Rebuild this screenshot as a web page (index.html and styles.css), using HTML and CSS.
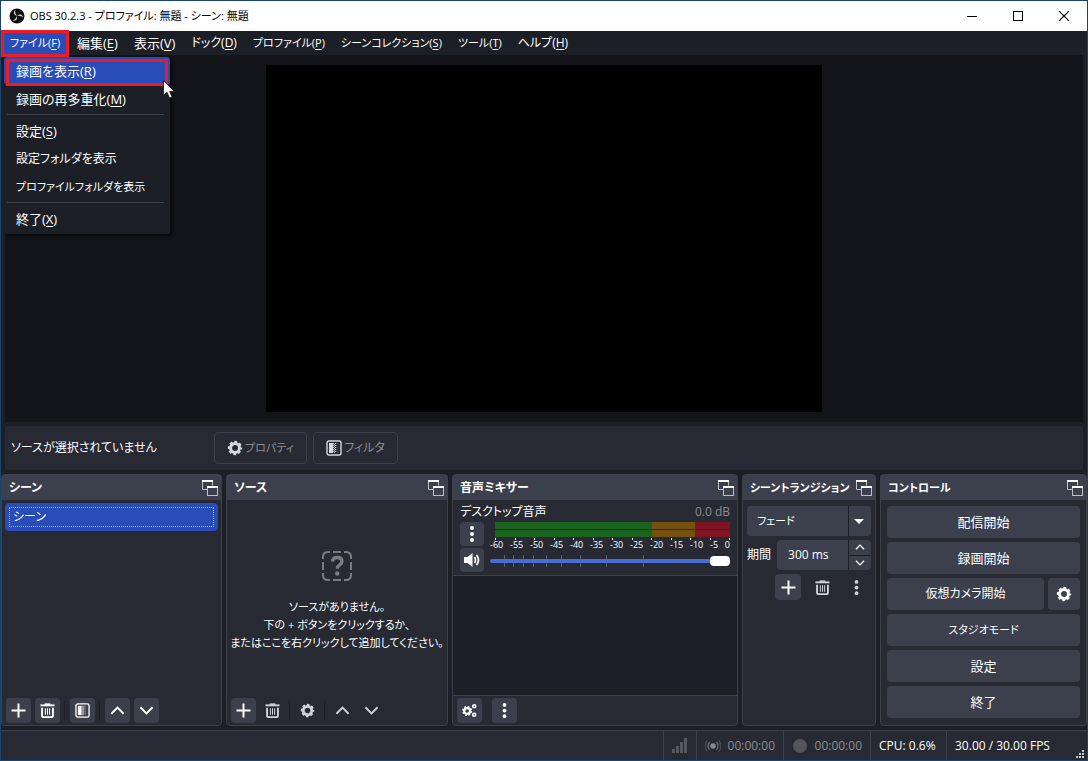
FILE: index.html
```html
<!DOCTYPE html>
<html lang="ja">
<head>
<meta charset="utf-8">
<meta name="viewport" content="width=device-width, initial-scale=1">
<title>OBS 30.2.3</title>
<link rel="stylesheet" href="styles.css">
</head>
<body>
<svg class="sprite" aria-hidden="true">
  <symbol id="i-plus" viewBox="0 0 15 15"><path d="M7.500 .5v14M.5 7.500h14" stroke="currentColor" stroke-width="2" fill="none"/></symbol>
  <symbol id="i-trash" viewBox="0 0 16 16"><path d="M.5 2.500h15" stroke="currentColor" stroke-width="2"/><path d="M5 1.200h6" stroke="currentColor" stroke-width="1.600"/><path d="M2.200 5v8.200q0 1.800 1.800 1.800h8q1.800 0 1.800-1.800V5" stroke="currentColor" stroke-width="2" fill="none"/><path d="M5.700 5.500v7M8 5.500v7M10.300 5.500v7" stroke="currentColor" stroke-width="1.100"/></symbol>
  <symbol id="i-filter" viewBox="0 0 16 16"><rect x="1" y="1" width="14" height="14" rx="2" fill="none" stroke="currentColor" stroke-width="1.400"/><path d="M3 3h4v10H3z" fill="currentColor"/><path d="M7.500 3v10M9.500 3v10" stroke="currentColor" stroke-width="1" stroke-dasharray="1 1"/><path d="M8.500 4v9" stroke="currentColor" stroke-width="1" stroke-dasharray="1 1"/><path d="M11 3v10" stroke="currentColor" stroke-width="1" stroke-dasharray="1 1" opacity=".5"/></symbol>
  <symbol id="i-up" viewBox="0 0 16 16"><path d="M1.500 11.500L8 5l6.500 6.500" stroke="currentColor" stroke-width="2" fill="none"/></symbol>
  <symbol id="i-down" viewBox="0 0 16 16"><path d="M1.500 4.500L8 11l6.500-6.500" stroke="currentColor" stroke-width="2" fill="none"/></symbol>
  <symbol id="i-gear" viewBox="0 0 16 16"><circle cx="8" cy="8" r="4.500" fill="none" stroke="currentColor" stroke-width="3"/><circle cx="8" cy="8" r="6.200" fill="none" stroke="currentColor" stroke-width="2" stroke-dasharray="2.800 2.070" stroke-dashoffset="1.400"/></symbol>
  <symbol id="i-dots" viewBox="0 0 16 16"><circle cx="8" cy="2" r="2" fill="currentColor"/><circle cx="8" cy="8" r="2" fill="currentColor"/><circle cx="8" cy="14" r="2" fill="currentColor"/></symbol>
  <symbol id="i-float" viewBox="0 0 16 16"><path d="M5 9.500H.5v-9h10v5" fill="none" stroke="#bebfc4"/><path d="M0 1h11" stroke="#fff" stroke-width="2"/><rect x="5.500" y="6.500" width="10" height="9" fill="none" stroke="#bebfc4"/><path d="M5 7h11" stroke="#fff" stroke-width="2"/></symbol>
  <symbol id="i-gears" viewBox="0 0 16 16"><circle cx="5.500" cy="8.500" r="3.100" fill="none" stroke="currentColor" stroke-width="2.400"/><circle cx="5.500" cy="8.500" r="4.600" fill="none" stroke="currentColor" stroke-width="1.500" stroke-dasharray="2 1.613"/><circle cx="13" cy="3.500" r="1.600" fill="none" stroke="currentColor" stroke-width="1.700"/><circle cx="13" cy="12.500" r="1.600" fill="none" stroke="currentColor" stroke-width="1.700"/></symbol>
  <symbol id="i-speaker" viewBox="0 0 16 16"><path d="M0 5h3.500L8.500 1v14l-5-4H0z" fill="currentColor"/><path d="M10.500 5q2 3 0 6M12.500 3q4 5 0 10" fill="none" stroke="currentColor" stroke-width="1.700"/></symbol>
</svg>

<div class="window">
  <header class="titlebar">
    <svg class="logo" viewBox="0 0 16 16"><circle cx="8" cy="8" r="7.500" fill="#0c0c0c"/><g fill="#d8d8d8"><path d="M6.500 2C3.900 3.700 4.300 7 8 7.800 6.200 6.300 5.800 4.200 6.500 2z"/><path d="M6.500 2C3.900 3.700 4.300 7 8 7.800 6.200 6.300 5.800 4.200 6.500 2z" transform="rotate(120 8 8)"/><path d="M6.500 2C3.900 3.700 4.300 7 8 7.800 6.200 6.300 5.800 4.200 6.500 2z" transform="rotate(240 8 8)"/></g></svg>
    <h1 class="title">OBS 30.2.3 - プロファイル: 無題 - シーン: 無題</h1>
    <button class="winbtn" aria-label="最小化"><svg viewBox="0 0 10 10"><path d="M0 5.500h10" stroke="#000"/></svg></button>
    <button class="winbtn" aria-label="最大化"><svg viewBox="0 0 10 10"><rect x=".5" y=".5" width="9" height="9" fill="none" stroke="#000"/></svg></button>
    <button class="winbtn" aria-label="閉じる"><svg viewBox="0 0 10 10"><path d="M0 0l10 10M10 0L0 10" stroke="#000" stroke-width="1.200"/></svg></button>
  </header>

  <nav class="menubar">
    <div class="menu-root">
      <button class="menu-title text-s active marked">ファイル(<u>F</u>)</button>
      <div class="menu" role="menu">
        <button class="menu-item text-l active marked" role="menuitem">録画を表示(<u>R</u>)<svg class="pointer" viewBox="0 0 12 19"><path d="M.5.5v15l3.500-3.200 2.500 5.700 2.600-1.100-2.500-5.500h4.700z" fill="#fff" stroke="#111" stroke-width=".8"/></svg></button>
        <button class="menu-item text-l" role="menuitem">録画の再多重化(<u>M</u>)</button>
        <hr class="menu-sep">
        <button class="menu-item text-l" role="menuitem">設定(<u>S</u>)</button>
        <button class="menu-item" role="menuitem">設定フォルダを表示</button>
        <button class="menu-item text-s" role="menuitem">プロファイルフォルダを表示</button>
        <hr class="menu-sep">
        <button class="menu-item text-l" role="menuitem">終了(<u>X</u>)</button>
      </div>
    </div>
    <button class="menu-title text-l">編集(<u>E</u>)</button>
    <button class="menu-title text-l">表示(<u>V</u>)</button>
    <button class="menu-title">ドック(<u>D</u>)</button>
    <button class="menu-title text-s">プロファイル(<u>P</u>)</button>
    <button class="menu-title text-s">シーンコレクション(<u>S</u>)</button>
    <button class="menu-title text-s">ツール(<u>T</u>)</button>
    <button class="menu-title">ヘルプ(<u>H</u>)</button>
  </nav>

  <main class="preview"><div class="canvas"></div></main>

  <section class="context">
    <span class="context-label">ソースが選択されていません</span>
    <button class="outline-btn text-s" disabled><svg class="icon"><use href="#i-gear"/></svg>プロパティ</button>
    <button class="outline-btn" disabled><svg class="icon"><use href="#i-filter"/></svg>フィルタ</button>
  </section>

  <div class="docks">
    <section class="dock">
      <div class="dock-head"><h2>シーン</h2><button class="float" aria-label="フロート"><svg class="icon"><use href="#i-float"/></svg></button></div>
      <div class="scene-list"><button class="scene"><span class="scene-name">シーン</span></button></div>
      <div class="toolbar">
        <button class="tool" aria-label="追加"><svg class="icon"><use href="#i-plus"/></svg></button>
        <button class="tool" aria-label="削除"><svg class="icon"><use href="#i-trash"/></svg></button>
        <i class="tool-sep"></i>
        <button class="tool" aria-label="フィルタ"><svg class="icon"><use href="#i-filter"/></svg></button>
        <i class="tool-sep"></i>
        <button class="tool" aria-label="上へ"><svg class="icon"><use href="#i-up"/></svg></button>
        <button class="tool" aria-label="下へ"><svg class="icon"><use href="#i-down"/></svg></button>
      </div>
    </section>

    <section class="dock">
      <div class="dock-head"><h2>ソース</h2><button class="float" aria-label="フロート"><svg class="icon"><use href="#i-float"/></svg></button></div>
      <div class="empty">
        <svg class="empty-icon" viewBox="0 0 30 30"><g fill="none" stroke="#7b7c80" stroke-width="2"><path d="M1 8V6q0-5 5-5h2M22 1h2q5 0 5 5v2M29 22v2q0 5-5 5h-2M8 29H6q-5 0-5-5v-2M11 1h8M11 29h8M1 11v8M29 11v8"/><path d="M10.300 10.500q.7-4 5-4 4.600 0 4.600 3.700 0 2.300-2.600 3.900-2 1.200-2 3.700" stroke-width="3.400"/></g><circle cx="15.200" cy="22.500" r="2.200" fill="#7b7c80"/></svg>
        <p>ソースがありません。<br>下の + ボタンをクリックするか、<br>またはここを右クリックして追加してください。</p>
      </div>
      <div class="toolbar">
        <button class="tool" aria-label="追加"><svg class="icon"><use href="#i-plus"/></svg></button>
        <button class="tool" disabled aria-label="削除"><svg class="icon"><use href="#i-trash"/></svg></button>
        <i class="tool-sep"></i>
        <button class="tool" disabled aria-label="プロパティ"><svg class="icon"><use href="#i-gear"/></svg></button>
        <i class="tool-sep"></i>
        <button class="tool" disabled aria-label="上へ"><svg class="icon"><use href="#i-up"/></svg></button>
        <button class="tool" disabled aria-label="下へ"><svg class="icon"><use href="#i-down"/></svg></button>
      </div>
    </section>

    <section class="dock">
      <div class="dock-head"><h2>音声ミキサー</h2><button class="float" aria-label="フロート"><svg class="icon"><use href="#i-float"/></svg></button></div>
      <div class="channel">
        <div class="channel-head"><label for="volume">デスクトップ音声</label><span class="db">0.0 dB</span></div>
        <div class="channel-body">
          <div class="channel-buttons">
            <button class="tool" aria-label="オプション"><svg class="icon"><use href="#i-dots"/></svg></button>
            <button class="tool" aria-label="ミュート"><svg class="icon"><use href="#i-speaker"/></svg></button>
          </div>
          <div class="channel-levels">
            <div class="meter"><div class="bar"></div><div class="bar"></div><div class="ticks"><i></i><i></i><i></i><i></i><i></i><i></i><i></i><i></i><i></i><i></i><i></i><i></i><i></i></div></div>
            <div class="scale"><span>-60</span><span>-55</span><span>-50</span><span>-45</span><span>-40</span><span>-35</span><span>-30</span><span>-25</span><span>-20</span><span>-15</span><span>-10</span><span>-5</span><span>0</span></div>
            <div class="fader">
              <svg class="fader-marks" viewBox="0 0 240 12" preserveAspectRatio="none"><path d="M14.500 0v12M23.500 0v12M33.500 0v12M43.500 0v12M56.500 0v12M71.500 0v12M90.500 0v12M116.500 0v12M153.500 0v12" stroke="#5b6273"/></svg>
              <input id="volume" type="range" min="0" max="100" value="100">
            </div>
          </div>
        </div>
      </div>
      <div class="mixer-space"></div>
      <div class="toolbar">
        <button class="tool" aria-label="詳細設定"><svg class="icon"><use href="#i-gears"/></svg></button>
        <i class="tool-sep hidden"></i>
        <button class="tool" aria-label="メニュー"><svg class="icon"><use href="#i-dots"/></svg></button>
      </div>
    </section>

    <section class="dock">
      <div class="dock-head"><h2 class="text-s">シーントランジション</h2><button class="float" aria-label="フロート"><svg class="icon"><use href="#i-float"/></svg></button></div>
      <div class="transitions">
        <div class="combo"><select class="text-s" aria-label="トランジション"><option>フェード</option></select><svg class="combo-arrow" viewBox="0 0 10 5"><path d="M0 0h10L5 5z" fill="#fff"/></svg></div>
        <div class="duration">
          <label for="duration">期間</label>
          <div class="spin">
            <input id="duration" type="text" value="300 ms">
            <div class="steps"><button aria-label="増やす"><svg><use href="#i-up"/></svg></button><button aria-label="減らす"><svg><use href="#i-down"/></svg></button></div>
          </div>
        </div>
        <div class="transition-tools">
          <button class="tool" aria-label="追加"><svg class="icon"><use href="#i-plus"/></svg></button>
          <button class="tool" disabled aria-label="削除"><svg class="icon"><use href="#i-trash"/></svg></button>
          <button class="tool" disabled aria-label="メニュー"><svg class="icon"><use href="#i-dots"/></svg></button>
        </div>
      </div>
    </section>

    <section class="dock">
      <div class="dock-head"><h2 class="text-s">コントロール</h2><button class="float" aria-label="フロート"><svg class="icon"><use href="#i-float"/></svg></button></div>
      <div class="controls">
        <button class="btn text-l">配信開始</button>
        <button class="btn text-l">録画開始</button>
        <div class="btn-row"><button class="btn">仮想カメラ開始</button><button class="btn small" aria-label="仮想カメラ設定"><svg class="icon"><use href="#i-gear"/></svg></button></div>
        <button class="btn text-s">スタジオモード</button>
        <button class="btn text-l">設定</button>
        <button class="btn text-l">終了</button>
      </div>
    </section>
  </div>

  <footer class="status">
    <div class="stat"><svg class="icon" viewBox="0 0 16 16"><path d="M0 11h3v4H0zM4 8h3v7H4zM8 4h3v11H8zM12 0h3v15h-3z" fill="#55585f"/></svg></div>
    <div class="stat timer"><svg class="icon" viewBox="0 0 16 16"><circle cx="8" cy="8" r="2.800" fill="#85878c"/><path d="M4.500 4q-3 4 0 8M11.500 4q3 4 0 8" fill="none" stroke="#6b6d73" stroke-width="1.300"/><path d="M2 2.500q-3.500 5.500 0 11M14 2.500q3.500 5.500 0 11" fill="none" stroke="#4b4e56" stroke-width="1.300"/></svg>00:00:00</div>
    <div class="stat timer"><svg class="icon" viewBox="0 0 16 16"><circle cx="8" cy="8" r="7" fill="#54565c"/></svg>00:00:00</div>
    <div class="stat cpu">CPU: 0.6%</div>
    <div class="stat fps">30.00 / 30.00 FPS<svg class="grip" viewBox="0 0 8 8"><path d="M6 0h2v2H6zM3 3h2v2H3zM6 3h2v2H6zM0 6h2v2H0zM3 6h2v2H3zM6 6h2v2H6z" fill="#c8c8ca"/></svg></div>
  </footer>
</div>
</body>
</html>
```

FILE: styles.css
```css
:root {
  --bg: #1d1f26;
  --panel: #272a33;
  --raised: #3c404d;
  --deep: #131419;
  --primary: #284cb8;
  --dim: #8c8d91;
  --mark: #ed1c24;
}

* { box-sizing: border-box; }

body {
  margin: 0;
  background: var(--bg);
  color: #fff;
  font-family: "Open Sans", "Noto Sans CJK JP", sans-serif;
  font-size: 12px;
  line-height: 18px;
  font-feature-settings: "palt";
  white-space: nowrap;
}

button, input, select {
  margin: 0;
  padding: 0;
  border: 0;
  color: inherit;
  font: inherit;
  font-feature-settings: inherit;
  background: none;
}

h1, h2, p { margin: 0; font-size: 12px; font-weight: 400; }
svg { display: block; flex: none; }
u { text-underline-offset: 2px; }
.text-s { font-size: 11px; }
.text-l { font-size: 13px; }
.sprite { position: absolute; width: 0; height: 0; }
.icon { width: 16px; height: 16px; }

.window {
  display: flex;
  flex-direction: column;
  min-height: 100vh;
  border: 1px solid #1b4468;
}

/* Title bar */
.titlebar {
  display: flex;
  align-items: center;
  height: 30px;
  padding-left: 8px;
  background: #fff;
  color: #000;
}
.logo { width: 16px; height: 16px; }
.title { flex: 1; margin-left: 5px; font-size: 11px; }
.winbtn { display: grid; place-items: center; width: 46px; height: 30px; }
.winbtn svg { width: 10px; height: 10px; }

/* Menu bar */
.menubar { display: flex; height: 24px; }
.menu-root { position: relative; }
.menu-title { position: relative; height: 24px; padding: 0 8px; }
.menu-title.active { min-width: 68px; background: var(--primary); }
.marked::after {
  content: "";
  position: absolute;
  inset: -1px 0 -2px;
  border: 3px solid var(--mark);
  z-index: 3;
}
.menu {
  position: absolute;
  top: 26px;
  left: 3px;
  z-index: 2;
  display: flex;
  flex-direction: column;
  width: 166px;
  padding-bottom: 1px;
  background: var(--bg);
  box-shadow: 2px 2px 3px #0009;
}
.menu-item { position: relative; height: 28px; padding: 0 12px; text-align: left; }
.menu-item.active { background: var(--primary); border-radius: 4px; }
.menu-item.marked::after { inset: 2px 2px -1px; }
.menu-sep { width: 157px; height: 1px; margin: 1px 3px 2px; border: 0; background: var(--raised); }
.pointer { position: absolute; left: 159px; top: 23px; z-index: 4; width: 12px; height: 19px; }

/* Preview */
.preview {
  display: grid;
  flex: 1;
  grid-template: minmax(0, 1fr) / minmax(0, 1fr);
  justify-items: center;
  min-height: 200px;
  margin: 0 4px;
  padding: 10px 0;
  background: var(--deep);
}
.canvas { height: 100%; aspect-ratio: 16 / 10; background: #000; }

/* Source toolbar */
.context {
  display: flex;
  align-items: center;
  gap: 6px;
  height: 44px;
  margin: 4px;
  padding: 0 6px;
  border-radius: 4px;
  background: var(--panel);
}
.context-label { min-width: 197px; }
.outline-btn {
  display: flex;
  align-items: center;
  justify-content: center;
  gap: 2px;
  height: 32px;
  padding: 0 12px;
  border: 1px solid var(--raised);
  border-radius: 4px;
  color: var(--dim);
}
.outline-btn .icon { color: #d6d8e0; }

/* Docks */
.docks {
  display: grid;
  grid-template-columns: minmax(0, 221fr) minmax(0, 222fr) minmax(0, 286fr) minmax(0, 134fr) minmax(0, 207fr);
  gap: 4px;
  margin-bottom: 4px;
}
.dock {
  display: flex;
  flex-direction: column;
  border: 1px solid var(--raised);
  border-radius: 4px;
  background: var(--panel);
}
.dock-head {
  display: flex;
  align-items: center;
  justify-content: space-between;
  height: 25px;
  padding: 0 3px 0 7px;
  background: var(--raised);
}
.dock-head h2 { font-weight: 600; }

.scene-list { flex: 1; padding: 3px; }
.scene {
  display: block;
  width: 100%;
  height: 28px;
  padding: 4px;
  border-radius: 4px;
  background: var(--primary);
  text-align: left;
}
.scene-name { display: block; border: 1px dotted #d9b648; padding: 0 3px; }

.toolbar { display: flex; align-items: center; gap: 4px; padding: 2px 4px; }
.tool {
  display: grid;
  place-items: center;
  width: 25px;
  height: 25px;
  border-radius: 4px;
  background: var(--raised);
}
.tool .icon { width: 15px; height: 15px; }
.tool:disabled { background: none; color: #d0d2d8; }
.tool-sep { width: 1px; height: 19px; margin-right: 1px; background: var(--bg); }
.tool-sep.hidden { visibility: hidden; }

.empty {
  display: flex;
  flex: 1;
  flex-direction: column;
  align-items: center;
  justify-content: center;
  gap: 17px;
  padding-top: 6px;
  text-align: center;
}
.empty p { font-size: 11px; }
.empty-icon { width: 30px; height: 30px; }

/* Mixer */
.channel { padding: 3px 7px; border-bottom: 1px solid var(--raised); }
.channel-head { display: flex; justify-content: space-between; }
.db { color: var(--dim); }
.channel-body { display: flex; gap: 6px; padding-top: 1px; }
.channel-buttons { display: grid; gap: 2px; }
.channel-buttons .tool { width: 24px; height: 24px; }
.channel-buttons .icon { width: 16px; height: 16px; }
.channel-levels { flex: 1; min-width: 0; }
.meter { display: grid; gap: 1px; padding-left: 5px; }
.bar { height: 7px; background: linear-gradient(90deg, #1a6420 67%, #75510f 67% 85%, #7f1423 85%); }
.ticks { display: flex; justify-content: space-between; height: 2px; }
.ticks i { width: 1px; background: #fff; }
.scale { display: flex; justify-content: space-between; font-size: 9px; line-height: 9px; }
.fader { display: grid; align-items: center; margin-top: 6px; }
.fader > * { grid-area: 1 / 1; }
.fader-marks { width: 100%; height: 12px; }
#volume { width: 100%; height: 12px; appearance: none; }
#volume::-webkit-slider-runnable-track { height: 4px; border-radius: 2px; background: #476bd7; }
#volume::-webkit-slider-thumb { appearance: none; width: 20px; height: 10px; margin-top: -3px; border-radius: 4px; background: #fff; }
.mixer-space { flex: 1; border-bottom: 1px solid var(--raised); background: var(--bg); }

/* Transitions */
.transitions { display: grid; grid-template-columns: minmax(0, 1fr); gap: 4px; padding: 6px 4px; }
.combo { display: grid; grid-template-columns: minmax(0, 1fr); align-items: center; }
.combo > * { grid-area: 1 / 1; }
.combo select {
  width: 100%;
  height: 30px;
  padding: 0 10px;
  appearance: none;
  border-radius: 4px;
  background: linear-gradient(var(--bg), var(--bg)) right 22px top / 1px 100% no-repeat var(--raised);
}
.combo-arrow { justify-self: end; width: 10px; height: 5px; margin-right: 7px; pointer-events: none; }
.duration { display: flex; align-items: center; gap: 6px; }
.spin { display: flex; flex: 1; min-width: 0; height: 30px; border-radius: 4px; background: var(--raised); }
.spin input { flex: 1; min-width: 0; padding-left: 11px; }
.steps { display: grid; width: 23px; border-left: 1px solid var(--bg); }
.steps button { display: grid; place-items: center; }
.steps button + button { border-top: 1px solid var(--bg); }
.steps svg { width: 10px; height: 10px; }
.transition-tools { display: flex; gap: 8px; justify-content: flex-end; padding-right: 2px; }
.transition-tools .tool { width: 26px; height: 26px; }

/* Controls */
.controls { display: grid; gap: 4px; padding: 6px 6px 7px; }
.btn { flex: 1; height: 32px; border-radius: 4px; background: var(--raised); }
.btn-row { display: flex; gap: 4px; }
.btn.small { display: grid; flex: none; place-items: center; width: 32px; }

/* Status bar */
.status {
  display: flex;
  justify-content: flex-end;
  height: 30px;
  border-top: 1px solid var(--raised);
  background: var(--panel);
}
.stat {
  display: flex;
  align-items: center;
  justify-content: space-between;
  padding: 0 8px;
  border-left: 1px solid var(--raised);
}
.timer { min-width: 87px; color: var(--dim); }
.cpu { min-width: 76px; }
.fps { min-width: 141px; padding-right: 3px; }
.grip { align-self: flex-end; width: 8px; height: 8px; margin-bottom: 2px; }
```
